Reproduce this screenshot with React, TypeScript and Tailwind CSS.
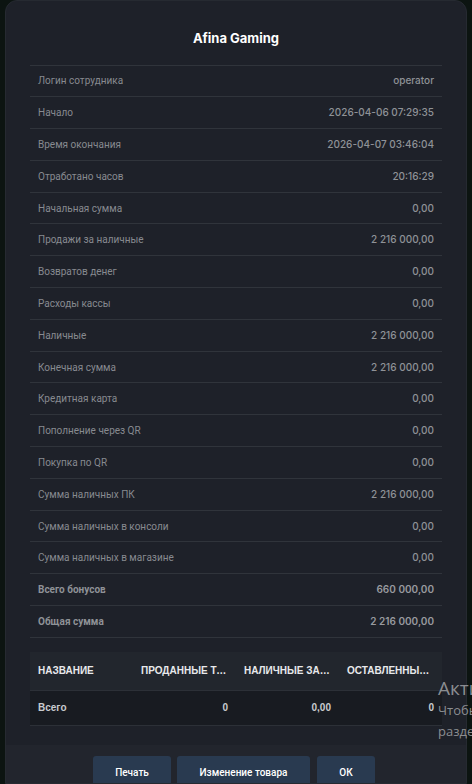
const rows: [string, string][] = [
  ["Логин сотрудника", "operator"],
  ["Начало", "2026-04-06 07:29:35"],
  ["Время окончания", "2026-04-07 03:46:04"],
  ["Отработано часов", "20:16:29"],
  ["Начальная сумма", "0,00"],
  ["Продажи за наличные", "2 216 000,00"],
  ["Возвратов денег", "0,00"],
  ["Расходы кассы", "0,00"],
  ["Наличные", "2 216 000,00"],
  ["Конечная сумма", "2 216 000,00"],
  ["Кредитная карта", "0,00"],
  ["Пополнение через QR", "0,00"],
  ["Покупка по QR", "0,00"],
  ["Сумма наличных ПК", "2 216 000,00"],
  ["Сумма наличных в консоли", "0,00"],
  ["Сумма наличных в магазине", "0,00"],
];

const totals: [string, string][] = [
  ["Всего бонусов", "660 000,00"],
  ["Общая сумма", "2 216 000,00"],
];

const label = "font-['Roboto','Liberation_Sans',sans-serif]";
const num = "font-['Inter','Noto_Sans',sans-serif]";

export default function App() {
  return (
    <div className="relative h-[784px] w-[472px] overflow-hidden bg-[#0c1411]">
      {/* Modal */}
      <div className="mx-[5px] flex h-full flex-col overflow-hidden rounded-t-[12px] border border-[#262a31] bg-[#1e2129]">
        <div className="flex-1 px-[24px] pb-[19px]">
          <h2 className={`${num} pt-[28px] pb-[16px] text-center text-[13px] font-bold text-white`}>
            Afina Gaming
          </h2>

          {/* Shift summary */}
          <div className="border-t border-[#30343b]">
            {rows.map(([k, v]) => (
              <div key={k} className="flex h-[31.8px] items-center justify-between border-b border-[#30343b] px-[8px]">
                <span className={`${label} text-[10px] text-[#878a90]`}>{k}</span>
                <span className={`${num} text-[10px] font-medium text-[#8f9297]`}>{v}</span>
              </div>
            ))}
            {totals.map(([k, v]) => (
              <div key={k} className="flex h-[31.8px] items-center justify-between border-b border-[#30343b] px-[8px]">
                <span className={`${label} text-[10px] font-bold text-[#8f9297]`}>{k}</span>
                <span className={`${num} text-[10px] font-semibold text-[#989a9f]`}>{v}</span>
              </div>
            ))}
          </div>

          {/* Products table */}
          <div className="mt-[14px] font-['Liberation_Sans','Roboto',sans-serif] text-[10px] font-bold">
            <div className="grid h-[38px] grid-cols-4 items-center bg-[#22262d] text-[#e8e9eb]">
              <div className="px-[8px]">НАЗВАНИЕ</div>
              <div className="truncate px-[8px]">ПРОДАННЫЕ ТОВАРЫ</div>
              <div className="truncate px-[8px]">НАЛИЧНЫЕ ЗА ТОВАРЫ</div>
              <div className="truncate px-[8px]">ОСТАВЛЕННЫЕ ТОВАРЫ</div>
            </div>
            <div className="grid h-[36px] grid-cols-4 items-center border-t border-b border-[#2c3037] bg-[#181b21] text-[#c9cbcf]">
              <div className="px-[8px]">Всего</div>
              <div className="px-[8px] text-right">0</div>
              <div className="px-[8px] text-right">0,00</div>
              <div className="px-[8px] text-right">0</div>
            </div>
          </div>
        </div>

        {/* Footer */}
        <div className={`${label} flex h-[39px] shrink-0 items-start justify-center gap-[6px] bg-[#22252d] pt-[11px] pr-[4px] text-[10px] font-medium text-white`}>
          <button className="h-[34px] w-[78px] rounded-[3px] bg-[#293a50]">Печать</button>
          <button className="h-[34px] w-[133px] rounded-[3px] bg-[#293a50]">Изменение товара</button>
          <button className="ml-[1px] h-[34px] w-[58px] rounded-[3px] bg-[#293a50]">ОК</button>
        </div>
      </div>

      {/* Windows activation watermark */}
      <div className="pointer-events-none absolute left-[438px] top-[676px] whitespace-nowrap font-['Open_Sans','Noto_Sans',sans-serif] text-[#a9abae]/80">
        <div className="text-[19px] leading-[24px]">Активация Windows</div>
        <div className="text-[13px] leading-[21px]">Чтобы активировать Windows, перейдите в</div>
        <div className="text-[13px] leading-[21px]">раздел "Параметры".</div>
      </div>
    </div>
  );
}
